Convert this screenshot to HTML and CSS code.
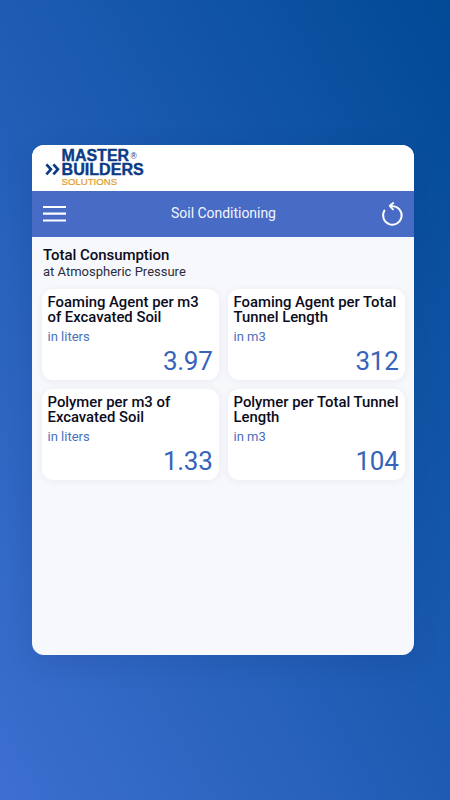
FILE: index.html
```html
<!DOCTYPE html>
<html lang="en">
<head>
<meta charset="utf-8">
<title>Soil Conditioning</title>
<link rel="stylesheet" href="styles.css">
</head>
<body>
<main class="panel">
  <header class="brand">
    <svg class="logo" width="102" height="42" viewBox="0 0 102 42" role="img">
      <path class="chevrons" d="M2.4 17.4L6.9 22.3 2.4 27.4M9.4 17.4L13.9 22.3 9.4 27.4"/>
      <text class="logo-main" x="17.6" y="14.2" textLength="67.5" lengthAdjust="spacingAndGlyphs">MASTER</text>
      <text class="logo-mark" x="86.6" y="11.7">®</text>
      <text class="logo-main" x="17.6" y="28.4" textLength="82.2" lengthAdjust="spacingAndGlyphs">BUILDERS</text>
      <text class="logo-sub" x="17.6" y="38" textLength="55.5" lengthAdjust="spacingAndGlyphs">SOLUTIONS</text>
    </svg>
  </header>
  <nav class="bar">
    <svg width="24" height="24" viewBox="0 0 24 24"><path class="menu" d="M0 5h23M0 11.7h23M0 18.5h23"/></svg>
    <h1 class="title">Soil Conditioning</h1>
    <svg width="24" height="26" viewBox="0 0 24 26"><path class="reset" d="M3.4 9.6A9.3 9.3 0 1 0 11.2 5.1L9 4.8M12.2 2L8.8 4.8l3.2 3.6"/></svg>
  </nav>
  <section class="content">
    <h2 class="heading">Total Consumption</h2>
    <p class="subheading">at Atmospheric Pressure</p>
    <div class="cards">
      <article class="card"><h3>Foaming Agent per m3<br>of Excavated Soil</h3><p class="unit">in liters</p><p class="value">3.97</p></article>
      <article class="card"><h3>Foaming Agent per Total<br>Tunnel Length</h3><p class="unit">in m3</p><p class="value">312</p></article>
      <article class="card"><h3>Polymer per m3 of<br>Excavated Soil</h3><p class="unit">in liters</p><p class="value">1.33</p></article>
      <article class="card"><h3>Polymer per Total Tunnel<br>Length</h3><p class="unit">in m3</p><p class="value">104</p></article>
    </div>
  </section>
</main>
</body>
</html>
```
FILE: styles.css
```css
* { box-sizing: border-box; margin: 0; padding: 0; }
body {
  height: 800px;
  padding: 145px 36px 0 31.5px;
  background: linear-gradient(to bottom left, #004a96, #1e5cb3 50%, #3d6fd0);
  font-family: Roboto, "Liberation Sans", sans-serif;
  color: #0b0c20;
}
.panel {
  height: 510px;
  border-radius: 12px;
  overflow: hidden;
  background: #f7f8fc;
  box-shadow: 0 8px 28px rgba(20, 30, 80, .12);
}
.brand { height: 46px; padding: 2px 12px; background: #fff; }
.logo { display: block; }
.logo-main { font: bold 15.8px "Liberation Sans", sans-serif; fill: #0b3b85; stroke: #0b3b85; stroke-width: .4px; }
.logo-mark { font: 8.5px "Liberation Sans", sans-serif; fill: #0b3b85; }
.logo-sub { font: 9.6px "Liberation Sans", sans-serif; fill: #dc9b2c; stroke: #dc9b2c; stroke-width: .2px; }
.chevrons { fill: none; stroke: #0b3b85; stroke-width: 2.7; }
.bar {
  height: 46px;
  padding: 0 9px 1px 11.5px;
  display: flex;
  align-items: center;
  justify-content: space-between;
  background: #486bc5;
}
.menu { fill: none; stroke: #fff; stroke-width: 2.2; }
.reset { fill: none; stroke: #fff; stroke-width: 1.9; stroke-linecap: round; stroke-linejoin: round; }
.title { margin: -1px 1px 0 0; font-size: 14px; font-weight: 400; letter-spacing: -.03px; color: #f1f5ff; }
.content { padding: 9px 10px 0; }
.heading { padding-left: 1.5px; font-size: 15px; line-height: 18px; font-weight: 500; letter-spacing: -.05px; }
.subheading { padding-left: 1.5px; font-size: 13px; line-height: 16px; color: #2b2d3f; }
.cards { margin-top: 9px; display: grid; grid-template-columns: 177px 177px; gap: 9px; }
.card {
  height: 91px;
  padding: 6px 6px;
  border-radius: 11px;
  background: #fff;
  box-shadow: 0 1px 8px rgba(30, 40, 80, .06);
}
.card h3 { font-size: 14.85px; line-height: 15px; font-weight: 500; white-space: nowrap; }
.unit { margin-top: 4px; font-size: 13px; line-height: 15px; color: #4a70bb; }
.value { margin-top: 1px; font-size: 26px; line-height: 32px; letter-spacing: -.3px; text-align: right; color: #3763ba; }
```
